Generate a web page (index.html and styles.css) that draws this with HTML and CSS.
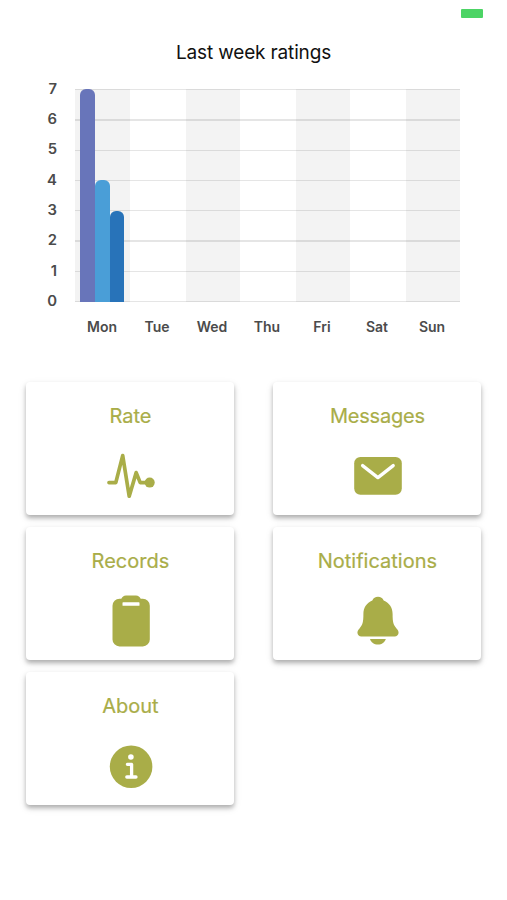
FILE: index.html
```html
<!DOCTYPE html>
<html lang="en">
<head>
<meta charset="utf-8">
<title>Ratings</title>
<link rel="stylesheet" href="styles.css">
</head>
<body>
<header class="status"><span class="battery"></span></header>
<main>
<h1 class="title">Last week ratings</h1>
<section class="chart">
  <div class="y-axis"><span>7</span><span>6</span><span>5</span><span>4</span><span>3</span><span>2</span><span>1</span><span>0</span></div>
  <div class="plot">
    <div class="day shaded"><i class="bar purple"></i><i class="bar sky"></i><i class="bar blue"></i></div>
    <div class="day"></div>
    <div class="day shaded"></div>
    <div class="day"></div>
    <div class="day shaded"></div>
    <div class="day"></div>
    <div class="day shaded"></div>
  </div>
  <div class="x-axis"><span>Mon</span><span>Tue</span><span>Wed</span><span>Thu</span><span>Fri</span><span>Sat</span><span>Sun</span></div>
</section>
<nav class="menu">
  <a class="card"><span class="label">Rate</span>
    <svg class="icon" viewBox="0 0 64 56"><path class="line" d="M10 34.6h6.8L23.7 7.6l6.5 40.6 7-23.6 4 10H49"/><circle cx="50.7" cy="34.6" r="5"/></svg></a>
  <a class="card"><span class="label messages">Messages</span>
    <svg class="icon" viewBox="0 0 64 56"><rect x="8.2" y="9" width="47.6" height="37.7" rx="6.2"/><path class="cut" d="M16.6 17.6l15.3 12 15.3-12"/></svg></a>
  <a class="card"><span class="label">Records</span>
    <svg class="icon" viewBox="0 0 64 56"><path d="M20.5 5.7h1.8a5.3 5.3 0 0 1 4.7-3.3h10a5.3 5.3 0 0 1 4.7 3.3h2a7 7 0 0 1 7.1 7v33.7a7 7 0 0 1-7 7H20.5a7 7 0 0 1-7-7V12.7a7 7 0 0 1 7-7z"/><rect class="hole" x="23.5" y="9.3" width="17" height="3.5" rx=".6"/></svg></a>
  <a class="card"><span class="label">Notifications</span>
    <svg class="icon" viewBox="0 0 64 56"><path d="M32 3.7c-2.7 0-4.6 1.300-5.700 3.700-5.700 2.300-8.900 7.200-8.900 13.600 0 8.200-.8 10.900-3.900 14.400-1.700 1.900-2.300 3.200-2 4.900.3 2 1.700 3.100 3.800 3.100h33.400c2.100 0 3.500-1.100 3.800-3.100.3-1.700-.3-3-2-4.900-3.100-3.500-3.900-6.200-3.900-14.400 0-6.400-3.200-11.300-8.900-13.600-1.100-2.400-3-3.700-5.700-3.700z"/><path d="M24 46h15.800c-1 3.500-4 5.600-7.900 5.600S25 49.500 24 46z"/></svg></a>
  <a class="card"><span class="label">About</span>
    <svg class="icon" viewBox="0 0 64 56"><circle cx="32.1" cy="27.7" r="21.3"/><circle class="hole" cx="31.9" cy="18" r="2.8"/><path class="cut" d="M28.4 25.3h4.2v12.3M27.8 38h9.2"/></svg></a>
</nav>
</main>
</body>
</html>
```
FILE: styles.css
```css
* { box-sizing: border-box; }
body {
  margin: 0;
  min-height: 100vh;
  background: #fff;
  font-family: Inter, "Liberation Sans", sans-serif;
}
.status {
  display: flex;
  justify-content: flex-end;
  height: 40px;
  padding: 8.5px 24px 0 0;
}
.battery { width: 22.5px; height: 9px; background: #4cd465; border-radius: 1px; }
.title {
  margin: 0;
  height: 48.5px;
  line-height: 25px;
  font-size: 19px;
  font-weight: 400;
  letter-spacing: -0.15px;
  text-align: center;
  color: #111;
}
.chart {
  display: grid;
  grid-template: 213px 37px / 57px 385px;
  column-gap: 17.5px;
  font-size: 14px;
  font-weight: 600;
  color: #4b4b4b;
}
.y-axis {
  display: flex;
  flex-direction: column;
  justify-content: space-between;
  margin: -10px 0 -9.5px;
  text-align: right;
  line-height: 20px;
}
.y-axis span { transform: scaleX(1.06); transform-origin: right; }
.plot {
  display: grid;
  grid-template-columns: repeat(7, 1fr);
  background: repeating-linear-gradient(to bottom, rgba(0,0,0,.1) 0 1.3px, transparent 1.3px 30.29px);
}
.day { display: flex; align-items: flex-end; margin-left: 1px; }
.shaded { background: rgba(0,0,0,.047); }
.day:first-child { margin-left: 0; padding-left: 5.5px; }
.bar { width: 14.8px; border-radius: 6px 6px 0 0; }
.purple { height: 213px; background: #6875ba; }
.sky { height: 121.5px; background: #4a9ed7; }
.blue { height: 91px; background: #2873b9; }
.x-axis {
  grid-column: 2;
  display: grid;
  grid-template-columns: repeat(7, 1fr);
  align-items: end;
  text-align: center;
  line-height: 24px;
}
.menu {
  display: grid;
  grid-template-columns: 208px 208px;
  grid-auto-rows: 133.3px;
  gap: 12px 39px;
  padding: 43px 0 40px 26.4px;
}
.card {
  display: flex;
  flex-direction: column;
  align-items: center;
  padding-top: 20px;
  background: #fff;
  border-radius: 4px;
  box-shadow: 0 3px 4px rgba(0,0,0,.25), 0 3px 8px rgba(0,0,0,.1);
}
.label { height: 46.5px; line-height: 28px; font-size: 20px; color: #a9ad48; -webkit-text-stroke: 0.2px #a9ad48; }
.messages { letter-spacing: -0.2px; }
.icon { width: 64px; height: 56px; margin-left: 1px; fill: #a9ad48; }
.line { fill: none; stroke: #a9ad48; stroke-width: 3.7; stroke-linecap: round; stroke-linejoin: round; }
.cut { fill: none; stroke: #fff; stroke-width: 3.3; stroke-linecap: round; stroke-linejoin: round; }
.hole { fill: #fff; }
```
